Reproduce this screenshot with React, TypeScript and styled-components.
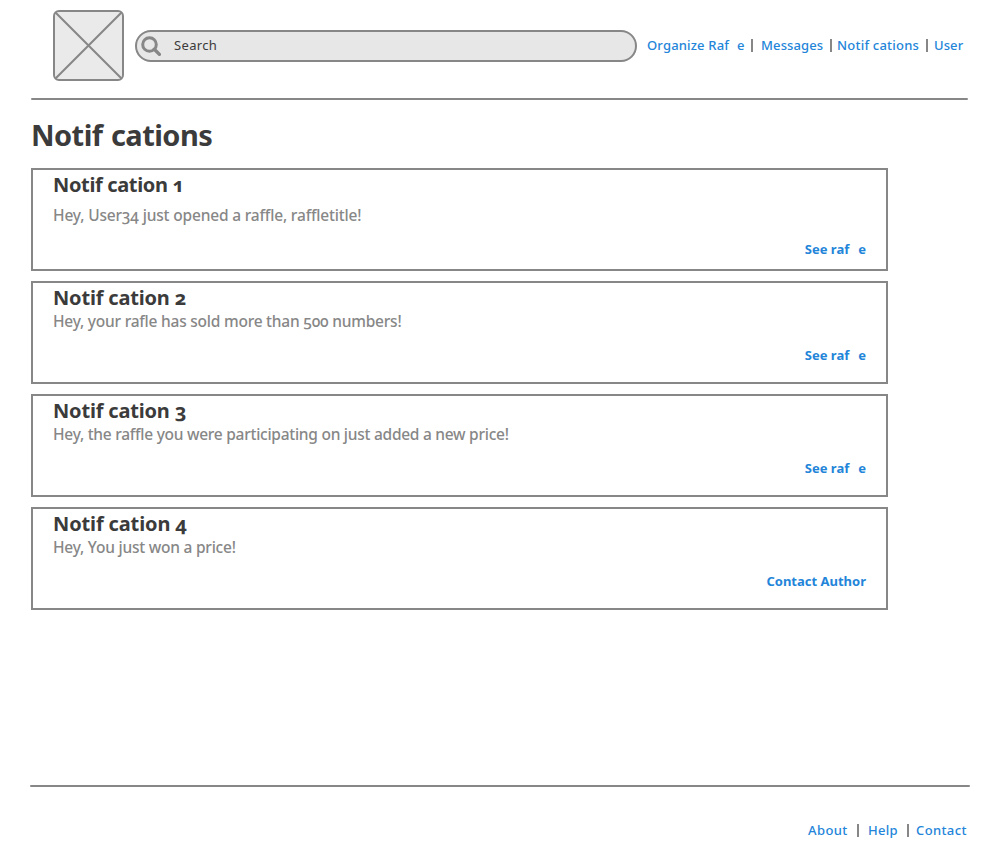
import React from "react";
import styled, { createGlobalStyle } from "styled-components";

const GRAY = "#878787";
const INK = "#3b3b3b";
const BLUE = "#2385d9";

const GlobalStyle = createGlobalStyle`
  * { box-sizing: border-box; }
  body {
    margin: 0;
    background: #fff;
    font-family: "Noto Sans", "Open Sans", sans-serif;
    font-variant-numeric: oldstyle-nums;
  }
`;

const Page = styled.div`
  display: flex;
  flex-direction: column;
  width: 990px;
  height: 867px;
  overflow: hidden;
`;

const Header = styled.header`
  display: flex;
  align-items: flex-start;
  height: 98px;
  padding: 10px 0 0 53px;
`;

const Logo = styled.svg`
  display: block;
  flex: none;
  width: 71px;
  height: 71px;
`;

const SearchBox = styled.div`
  display: flex;
  flex: none;
  align-items: center;
  width: 502px;
  height: 32px;
  margin: 20px 0 0 11px;
  padding-left: 4px;
  border: 2px solid ${GRAY};
  border-radius: 16px;
  background: #e7e7e7;
`;

const SearchIcon = styled.svg`
  flex: none;
  width: 20px;
  height: 20px;
`;

const SearchLabel = styled.span`
  margin: -2px 0 0 13px;
  color: ${INK};
  font-size: 13px;
  line-height: 18px;
  letter-spacing: 0.33px;
`;

const Nav = styled.nav`
  display: flex;
  align-items: flex-start;
  margin: 26px 0 0 10px;
`;

const NavLink = styled.a<{ $width: number; $spacing: number }>`
  flex: none;
  width: ${(p) => p.$width}px;
  color: ${BLUE};
  font-size: 13px;
  font-weight: 500;
  line-height: 18px;
  letter-spacing: ${(p) => p.$spacing}px;
  white-space: pre;
`;

const LinkTail = styled.span<{ $gap: number }>`
  margin-left: ${(p) => p.$gap}px;
`;

const Divider = styled.span<{ $before: number; $after: number }>`
  flex: none;
  width: 2px;
  height: 13px;
  margin: 3px ${(p) => p.$after}px 0 ${(p) => p.$before}px;
  background: ${GRAY};
`;

const Rule = styled.hr<{ $left: number; $width: number }>`
  flex: none;
  width: ${(p) => p.$width}px;
  height: 2px;
  margin: 0 0 0 ${(p) => p.$left}px;
  border: 0;
  border-radius: 1px;
  background: ${GRAY};
`;

const Main = styled.main`
  height: 685px;
  padding: 15px 0 0 31px;
`;

const Title = styled.h1`
  margin: 0;
  color: ${INK};
  font-size: 29px;
  font-weight: 700;
  line-height: 40px;
  letter-spacing: -0.55px;
  word-spacing: 1.5px;
  white-space: nowrap;
`;

const CardList = styled.div`
  display: grid;
  gap: 10px;
  width: 857px;
  margin-top: 13px;
`;

const Card = styled.article`
  display: flex;
  flex-direction: column;
  height: 103px;
  padding: 3px 20px 0 20px;
  border: 2px solid ${GRAY};
`;

const CardTitle = styled.h2<{ $spacing: number }>`
  margin: 0 0 -1px;
  color: ${INK};
  font-size: 20px;
  font-weight: 700;
  line-height: 24px;
  letter-spacing: ${(p) => p.$spacing}px;
`;

const Message = styled.p<{ $gap: number; $spacing: number }>`
  margin: ${(p) => p.$gap}px 0 15px;
  color: ${GRAY};
  font-size: 15.5px;
  font-weight: 500;
  line-height: 20px;
  letter-spacing: ${(p) => p.$spacing}px;
  white-space: nowrap;
`;

const CardLink = styled.a`
  align-self: flex-end;
  color: ${BLUE};
  font-size: 13px;
  font-weight: 700;
  line-height: 18px;
  white-space: nowrap;
`;

const Footer = styled.footer`
  display: flex;
  padding: 34px 0 0 808px;
`;

interface Notice {
  title: string;
  titleSpacing: number;
  message: string;
  spacing: number;
  gap: number;
  raffle: boolean;
}

const notices: Notice[] = [
  { title: "Notif cation 1", titleSpacing: -0.35, message: "Hey, User34 just opened a raffle, raffletitle!", spacing: -0.175, gap: 9, raffle: true },
  { title: "Notif cation 2", titleSpacing: -0.18, message: "Hey, your rafle has sold more than 500 numbers!", spacing: -0.23, gap: 2, raffle: true },
  { title: "Notif cation 3", titleSpacing: -0.18, message: "Hey, the raffle you were participating on just added a new price!", spacing: -0.265, gap: 2, raffle: true },
  { title: "Notif cation 4", titleSpacing: -0.13, message: "Hey, You just won a price!", spacing: -0.23, gap: 2, raffle: false },
];

export default function App() {
  return (
    <>
      <GlobalStyle />
      <Page>
        <Header>
          <Logo viewBox="0 0 71 71" fill="none" stroke={GRAY} strokeWidth="2">
            <rect x="1" y="1" width="69" height="69" rx="5" fill="#eaeaea" />
            <path d="M2.5 2.5 68.5 68.5M68.5 2.5 2.5 68.5" />
          </Logo>
          <SearchBox>
            <SearchIcon viewBox="0 0 20 20" fill="none" stroke={GRAY} strokeWidth="3">
              <circle cx="8.5" cy="8.5" r="6.8" />
              <path d="M13.3 13.3 18.4 18.4" strokeWidth="3.4" strokeLinecap="round" />
            </SearchIcon>
            <SearchLabel>Search</SearchLabel>
          </SearchBox>
          <Nav>
            <NavLink $width={98} $spacing={0.17}>
              Organize Raf<LinkTail $gap={8}>e</LinkTail>
            </NavLink>
            <Divider $before={6} $after={8} />
            <NavLink $width={64} $spacing={0.12}>Messages</NavLink>
            <Divider $before={5} $after={5} />
            <NavLink $width={84} $spacing={0.22}>Notif cations</NavLink>
            <Divider $before={5} $after={6} />
            <NavLink $width={32} $spacing={0.1}>User</NavLink>
          </Nav>
        </Header>
        <Rule $left={31} $width={937} />
        <Main>
          <Title>Notif cations</Title>
          <CardList>
            {notices.map((n) => (
              <Card key={n.title}>
                <CardTitle $spacing={n.titleSpacing}>{n.title}</CardTitle>
                <Message $gap={n.gap} $spacing={n.spacing}>{n.message}</Message>
                <CardLink>
                  {n.raffle ? <>See raf<LinkTail $gap={9}>e</LinkTail></> : "Contact Author"}
                </CardLink>
              </Card>
            ))}
          </CardList>
        </Main>
        <Rule $left={30} $width={940} />
        <Footer>
          <NavLink $width={41} $spacing={0.4}>About</NavLink>
          <Divider $before={8} $after={9} />
          <NavLink $width={31} $spacing={0.3}>Help</NavLink>
          <Divider $before={8} $after={7} />
          <NavLink $width={52} $spacing={0.38}>Contact</NavLink>
        </Footer>
      </Page>
    </>
  );
}
